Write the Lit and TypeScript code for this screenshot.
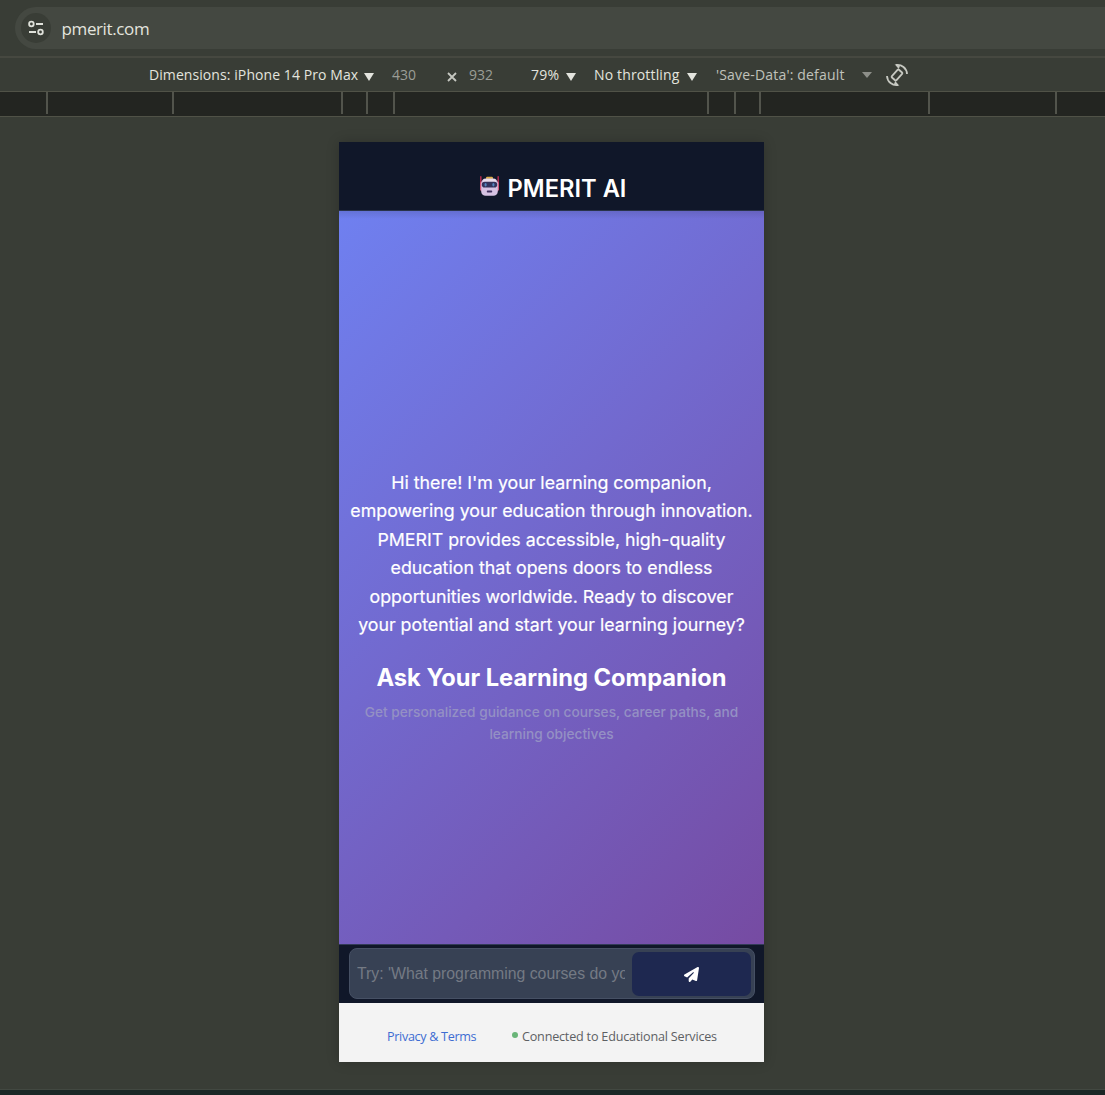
import { LitElement, html, css, svg } from "lit";
import { customElement } from "lit/decorators.js";

/** Widths of the ruler segments that precede each breakpoint tick. */
const RULER_SEGMENTS = [46, 124, 167, 23, 25, 312, 25, 23, 167, 125];

@customElement("browser-bar")
class BrowserBar extends LitElement {
  static styles = css`
    :host { display: block; background: #393d36; height: 56px; }
    .bar { display: flex; padding: 7px 0 0 15px; }
    .omnibox {
      flex: 1; height: 42px; box-sizing: border-box; display: flex; align-items: center;
      background: #444841; border-radius: 21px 0 0 21px; padding-left: 6px;
    }
    .site { width: 30px; height: 30px; border-radius: 50%; background: #393d36; display: flex; align-items: center; justify-content: center; }
    .url { margin-left: 10.5px; margin-top: 1px; font: 17px/24px "Open Sans", "Noto Sans", sans-serif; letter-spacing: -0.38px; color: #e3e4de; }
  `;
  render() {
    return html`<div class="bar"><div class="omnibox">
      <div class="site">
        <svg width="18" height="18" viewBox="0 0 18 18" fill="none" stroke="#dfe1da" stroke-width="1.8">
          <circle cx="4.4" cy="5" r="2.3" /><path d="M9 5h7M2 13h7" /><circle cx="13.5" cy="13" r="2.3" />
        </svg>
      </div>
      <span class="url">pmerit.com</span>
    </div></div>`;
  }
}

@customElement("device-toolbar")
class DeviceToolbar extends LitElement {
  static styles = css`
    :host { display: block; }
    .tools {
      display: flex; align-items: center; height: 35px; box-sizing: border-box; background: #393d36;
      border-top: 2px solid #464840; padding: 1px 0 0 149px; white-space: nowrap;
      font: 14px/20px "Open Sans", "Noto Sans", sans-serif; color: #e3e4de;
    }
    .tools > * { flex: none; }
    .tri { display: block; width: 10px; height: 8px; margin-top: 3px; fill: currentColor; }
    .dim { color: #9b9d97; }
    .device { width: 215px; letter-spacing: 0.08px; }
    .w { width: 55px; margin-left: 18px; }
    .times { width: 10px; height: 10px; margin-top: 4px; stroke: #c6c8c1; }
    .h { width: 62px; margin-left: 12px; }
    .zoom { width: 35px; letter-spacing: 0.3px; }
    .throttle { width: 93px; margin-left: 18px; letter-spacing: 0.15px; }
    .save { width: 146px; margin-left: 19px; color: #c0c2bb; letter-spacing: 0.18px; }
    .tri.soft { color: #8d8f89; margin-top: 0; height: 6px; }
    .rotate { margin-left: 13px; width: 24px; height: 24px; }
    .ruler {
      display: flex; height: 26px; box-sizing: border-box; background: #232521;
      border-top: 1px solid #505247; border-bottom: 1px solid #505247;
    }
    .tick { flex: none; width: 2px; height: 22px; background: #52544c; }
  `;
  private triangle(cls = "tri") {
    return html`<svg class=${cls} viewBox="0 0 10 8" preserveAspectRatio="none"><path d="M0 0H10L5 8Z" /></svg>`;
  }
  render() {
    return html`
      <div class="tools">
        <span class="device">Dimensions: iPhone 14 Pro Max</span>${this.triangle()}
        <span class="w dim">430</span>
        <svg class="times" viewBox="0 0 10 10" stroke-width="1.8"><path d="M1 1 9 9M9 1 1 9" /></svg>
        <span class="h dim">932</span>
        <span class="zoom">79%</span>${this.triangle()}
        <span class="throttle">No throttling</span>${this.triangle()}
        <span class="save">'Save-Data': default</span>${this.triangle("tri soft")}
        <svg class="rotate" viewBox="0 0 24 24" fill="none" stroke="#c6c8c1" stroke-width="1.8">
          <rect x="8.9" y="6.8" width="6.2" height="10.4" rx="1" transform="rotate(42 12 12)" />
          <path d="M11 2C16.500 1.200 21.800 5 22 11M13 22C7.500 22.800 2.200 19 2 13" />
          <path d="M9.600 1.300 15.200 2.200 13.800 6ZM14.400 22.700 8.800 21.800 10.200 18Z" fill="#c6c8c1" stroke="none" />
        </svg>
      </div>
      <div class="ruler">
        ${RULER_SEGMENTS.map((w) => html`<i class="tick" style="margin-left:${w}px"></i>`)}
      </div>`;
  }
}

const robot = svg`
  <rect x="0" y="0" width="1.6" height="14" rx=".8" fill="#a82a4c" />
  <rect x="17.4" y="0" width="1.600" height="14" rx=".8" fill="#a82a4c" />
  <rect x="0" y="6" width="3" height="9" rx="1.4" fill="#d05578" />
  <rect x="16" y="6" width="3" height="9" rx="1.4" fill="#d05578" />
  <path d="M6 3.400V2Q6 .8 7.200 .8H11.800Q13 .8 13 2V3.400Z" fill="#dcae48" />
  <rect x="1.200" y="2.600" width="16.600" height="17.200" rx="4.400" fill="#d6c2e2" />
  <rect x="3" y="2.900" width="13" height="4" rx="2" fill="#eadcec" />
  <rect x="1.800" y="5.800" width="15.400" height="5.800" rx="2.800" fill="#34335c" />
  <ellipse cx="5.600" cy="8.700" rx="1.100" ry="1.700" fill="#5585c0" />
  <ellipse cx="13.400" cy="8.700" rx="1.100" ry="1.700" fill="#5585c0" />
  <rect x="6.800" y="14.600" width="5.400" height="2" rx=".8" fill="#41305e" />`;

@customElement("pmerit-page")
class PmeritPage extends LitElement {
  static styles = css`
    :host {
      display: flex; flex-direction: column; width: 425px; height: 920px;
      font-family: Inter, sans-serif; color: #fff; box-shadow: 0 0 12px rgba(0, 0, 0, 0.2);
    }
    .head {
      height: 69px; box-sizing: border-box; background: #101729; border-bottom: 1px solid #29334a;
      display: flex; justify-content: center; padding-top: 33px; padding-left: 3px;
    }
    .robot { width: 19px; height: 20px; margin: 1px 9px 0 0; }
    .brand { font-size: 23.7px; line-height: 28px; font-weight: 600; white-space: nowrap; }
    .hero {
      height: 733px; box-sizing: border-box; padding-top: 258px; text-align: center; white-space: nowrap;
      background:
        linear-gradient(rgba(0, 0, 0, 0.1), transparent 8px),
        linear-gradient(135deg, #6f80f0, #764ba2);
    }
    .intro { margin: 0; font-size: 17.78px; line-height: 28.45px; -webkit-text-stroke: 0.2px #fff; }
    .title { margin: 22px 0 0; font-size: 23.7px; line-height: 32px; font-weight: 700; }
    .sub { margin: 8px 0 0; font-size: 13.7px; line-height: 21.8px; font-weight: 500; color: #9490c4; }
    .ask {
      height: 59px; box-sizing: border-box; background: #101729; border-top: 1px solid #333b58;
      padding: 3px 9px 4px 10px;
    }
    .field {
      display: flex; height: 51px; box-sizing: border-box; background: #374154;
      border: 1px solid #465064; border-radius: 8px; padding: 3px;
    }
    .hint {
      flex: 1; min-width: 0; height: 43px; box-sizing: border-box; margin: 0 7px 0 4px; padding: 0;
      border: 0; outline: 0; background: none;
      font: 15.8px/43px "Liberation Sans", Arial, sans-serif; color: #fff;
    }
    .hint::placeholder { color: #747a84; opacity: 1; }
    .send {
      flex: none; width: 119px; height: 44px; border: 0; border-radius: 7px; background: #1e2850; padding: 0;
      display: flex; align-items: center; justify-content: center;
    }
    .foot {
      flex: 1; background: #f3f3f3; display: flex; align-items: flex-start; padding: 24px 0 0 48px;
      font: 12.6px/20px "Open Sans", "Noto Sans", sans-serif; color: #5d6063; white-space: nowrap;
    }
    .link { width: 125px; color: #3d6cd2; letter-spacing: -0.32px; }
    .dot { width: 6px; height: 6px; border-radius: 50%; background: #69b578; margin: 5px 4px 0 0; }
    .status { letter-spacing: -0.2px; }
  `;
  render() {
    return html`
      <header class="head">
        <svg class="robot" viewBox="0 0 19 20">${robot}</svg>
        <span class="brand">PMERIT AI</span>
      </header>
      <main class="hero">
        <p class="intro">
          Hi there! I'm your learning companion,<br />empowering your education through innovation.<br />PMERIT
          provides accessible, high-quality<br />education that opens doors to endless<br />opportunities
          worldwide. Ready to discover<br />your potential and start your learning journey?
        </p>
        <h1 class="title">Ask Your Learning Companion</h1>
        <p class="sub">Get personalized guidance on courses, career paths, and<br />learning objectives</p>
      </main>
      <div class="ask">
        <div class="field">
          <input class="hint" placeholder="Try: 'What programming courses do you offer?'" />
          <button class="send" aria-label="Send">
            <svg width="15" height="15" viewBox="0 0 512 512" fill="#fff">
              <path d="M498.1 5.6c10.1 7 15.4 19.1 13.5 31.2l-64 416c-1.500 9.700-7.400 18.200-16 23s-18.900 5.400-28 1.600L284 427.700l-68.500 74.100c-8.900 9.700-22.900 12.900-35.200 8.100S160 493.200 160 480V396.400c0-4 1.500-7.800 4.200-10.700L331.800 202.800c5.800-6.300 5.600-16-.4-22s-15.700-6.400-22-.7L106 360.800 17.700 316.600C7.100 311.300 .3 300.700 0 288.900s5.900-22.800 16.100-28.700l448-256c10.700-6.100 23.900-5.500 34 1.400z" />
            </svg>
          </button>
        </div>
      </div>
      <footer class="foot">
        <span class="link">Privacy &amp; Terms</span>
        <i class="dot"></i><span class="status">Connected to Educational Services</span>
      </footer>`;
  }
}

@customElement("app-root")
class AppRoot extends LitElement {
  static styles = css`
    :host { display: flex; flex-direction: column; width: 1105px; height: 1095px; overflow: hidden; background: #393d36; }
    .canvas { flex: 1; padding: 25px 0 0 339px; }
    .edge { height: 5px; background: #1b2726; border-top: 1px solid #424841; }
  `;
  render() {
    return html`
      <browser-bar></browser-bar>
      <device-toolbar></device-toolbar>
      <div class="canvas"><pmerit-page></pmerit-page></div>
      <div class="edge"></div>`;
  }
}
